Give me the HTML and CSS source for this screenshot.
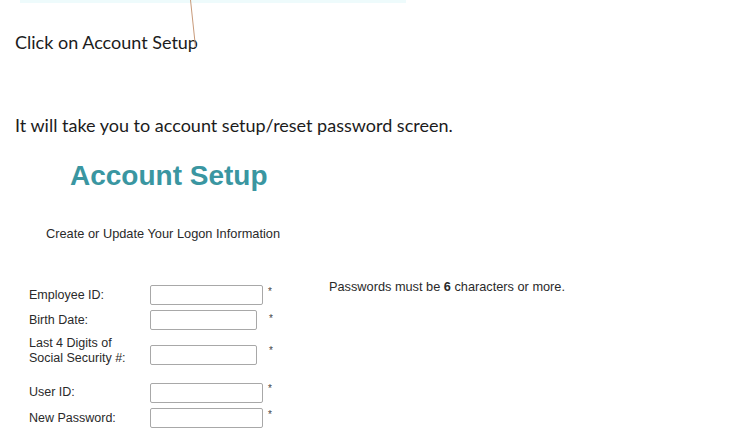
FILE: index.html
```html
<!DOCTYPE html>
<html>
<head>
<meta charset="utf-8">
<link rel="stylesheet" href="styles.css">
</head>
<body>
<div class="page">
  <div class="strip"></div>
  <svg class="pointer" width="730" height="60" viewBox="0 0 730 60"><line x1="190.5" y1="0" x2="195.5" y2="47" stroke="#c89a7a" stroke-width="1"/></svg>
  <p class="doc doc-first">Click on Account Setup</p>
  <p class="doc doc-second">It will take you to account setup/reset password screen.</p>
  <div class="shot">
    <h1 class="title">Account Setup</h1>
    <p class="subtitle">Create or Update Your Logon Information</p>
    <div class="formwrap">
      <div class="form">
        <div class="row r1"><span class="label">Employee ID:</span><span class="box wide"></span><span class="ast a-near">*</span></div>
        <div class="row r2"><span class="label">Birth Date:</span><span class="box narrow"></span><span class="ast a-far">*</span></div>
        <div class="row r3"><span class="label">Last 4 Digits of<br>Social Security #:</span><span class="box narrow"></span><span class="ast a-far">*</span></div>
        <div class="row r4"><span class="label">User ID:</span><span class="box wide"></span><span class="ast a-near">*</span></div>
        <div class="row r5"><span class="label">New Password:</span><span class="box wide"></span><span class="ast a-near">*</span></div>
      </div>
      <p class="note">Passwords must be <b>6</b> characters or more.</p>
    </div>
  </div>
</div>
</body>
</html>
```
FILE: styles.css
```css
html, body {
  margin: 0;
  padding: 0;
  background: #ffffff;
}
.page {
  position: relative;
  width: 730px;
  height: 430px;
  overflow: hidden;
  color: #1f1f1f;
}
.strip {
  margin-left: 20px;
  width: 386px;
  height: 3px;
  background: #eefbfc;
}
.pointer {
  position: absolute;
  left: 0;
  top: 0;
}
.doc {
  margin: 0 0 0 15px;
  font-family: Lato, "Open Sans", sans-serif;
  font-size: 18px;
  line-height: 22px;
  color: #1c1c1c;
}
.doc-first {
  margin-top: 28px;
}
.doc-second {
  margin-top: 61px;
}
.shot {
  font-family: "Liberation Sans", Arial, sans-serif;
  color: #2a2a2a;
}
.title {
  margin: 24px 0 0 70px;
  font-size: 28px;
  line-height: 32px;
  font-weight: bold;
  color: #3a96a1;
}
.subtitle {
  margin: 34px 0 0 46px;
  font-size: 12.8px;
  line-height: 15px;
}
.formwrap {
  display: flex;
  margin-top: 44px;
}
.form {
  display: flex;
  flex-direction: column;
  margin-left: 29px;
  width: 270px;
}
.row {
  display: flex;
  align-items: center;
  font-size: 12.5px;
  line-height: 15px;
}
.label {
  width: 121px;
  flex: none;
}
.box {
  flex: none;
  height: 18px;
  border: 1px solid #a8a8a8;
  border-radius: 2px;
  box-sizing: content-box;
}
.wide { width: 111px; }
.narrow { width: 105px; }
.ast {
  align-self: flex-start;
  font-size: 10px;
  line-height: 10px;
  color: #444;
}
.a-near { margin-left: 5px; margin-top: 2px; }
.a-far { margin-left: 12px; margin-top: 4px; }
.r1 { height: 20px; }
.r2 { height: 20px; margin-top: 5px; }
.r3 { height: 32px; margin-top: 5px; }
.r3 .box { margin-top: 8px; }
.r3 .ast { margin-top: 11px; }
.r3 .label { line-height: 15px; }
.r4 { height: 21px; margin-top: 15px; }
.r5 { height: 20px; margin-top: 5px; }
.note {
  margin: -5px 0 0 30px;
  font-size: 12.75px;
  line-height: 14px;
}
.note b { font-weight: bold; }
```
